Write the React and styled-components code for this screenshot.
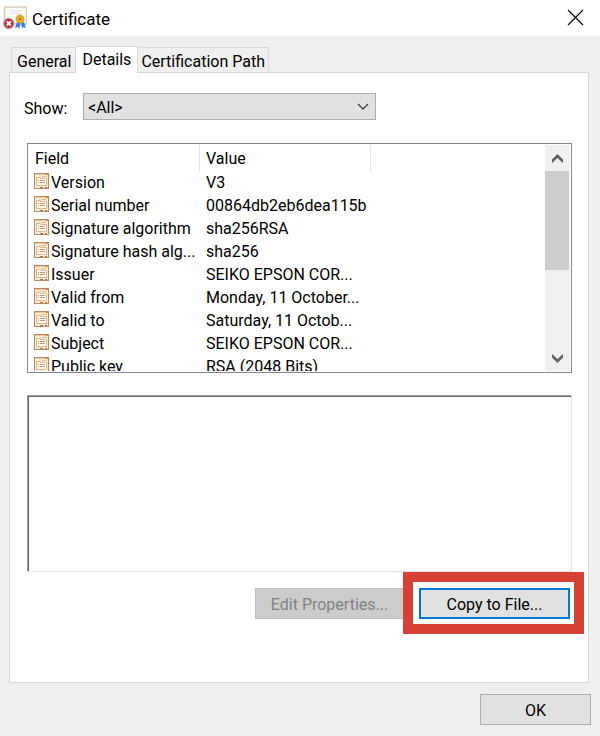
import React, { useCallback, useState } from "react";
import styled, { createGlobalStyle, css } from "styled-components";

const GlobalStyle = createGlobalStyle`
  * {
    box-sizing: border-box;
  }

  body {
    margin: 0;
    background-color: #efefef;
  }

  body,
  button,
  select,
  textarea {
    font-family: Roboto, "Noto Sans", sans-serif;
    font-size: 16px;
    line-height: 23px;
    color: #000;
  }
`;

const Dialog = styled.main`
  display: flex;
  flex-direction: column;
  min-height: 100vh;
`;

const TitleBar = styled.header`
  display: flex;
  align-items: center;
  height: 36px;
  padding: 0 16px 0 3px;
  background-color: #fff;

  h1 {
    flex: 1;
    margin: 0 0 0 5px;
    padding-top: 2px;
    font-size: 17px;
    font-weight: 400;
  }
`;

const CloseButton = styled.button`
  display: flex;
  padding: 0 0 2px;
  border: none;
  background: none;
`;

const Tabs = styled.div`
  display: flex;
  align-items: flex-end;
  padding: 10px 11px 0;
`;

const Tab = styled.button`
  height: 25px;
  padding: ${({ $first }) => ($first ? "2px 4px 0 5px" : "2px 3px 0")};
  border: 1px solid #d9d9d9;
  border-bottom: none;
  border-left-width: ${({ $first }) => ($first ? "1px" : "0")};
  background-color: #efefef;
  white-space: nowrap;

  ${({ $active }) =>
    $active &&
    css`
      height: 27px;
      padding: 0 6px 1px;
      margin-bottom: -1px;
      background-color: #fff;
      z-index: 1;
    `}
`;

const Panel = styled.section`
  display: flex;
  flex-direction: column;
  flex: 1;
  margin: 0 11px 0 9px;
  padding: 20px 16px 48px 17px;
  border: 1px solid #d9d9d9;
  background-color: #fff;
`;

const ShowRow = styled.div`
  display: flex;
  align-items: center;
  margin-left: -3px;

  label {
    width: 59px;
    padding-top: 4px;
  }
`;

const SelectBox = styled.div`
  position: relative;
  width: 293px;

  select {
    display: block;
    width: 100%;
    height: 27px;
    padding: 2px 4px 0;
    border: 1px solid #adadad;
    border-radius: 0;
    background-color: #e1e1e1;
    appearance: none;
  }

  svg {
    position: absolute;
    top: 10px;
    right: 7px;
    pointer-events: none;
  }
`;

const FieldList = styled.div`
  display: flex;
  height: 230px;
  margin-top: 23px;
  padding: 1px;
  border: 1px solid #828790;
  overflow: hidden;
`;

const ListView = styled.div`
  flex: 1;
  min-width: 0;
  overflow: hidden;
`;

const FieldTable = styled.table`
  width: 100%;
  table-layout: fixed;
  border-collapse: separate;
  border-spacing: 0;

  th,
  td {
    height: 23px;
    padding: 0 4px 0 6px;
    font-weight: 400;
    text-align: left;
    white-space: nowrap;
  }

  th {
    height: 26px;
    border-right: 1px solid #e5e5e5;
  }

  th:last-child {
    border-right: none;
  }

  td:first-child {
    padding: 0 2px 0 5px;
  }
`;

const FieldName = styled.div`
  display: flex;
  align-items: center;
  gap: 2px;

  svg {
    flex: none;
    margin-bottom: 3px;
  }
`;

const Scrollbar = styled.div`
  display: flex;
  flex-direction: column;
  width: 25px;
  background-color: #f0f0f0;
`;

const ScrollButton = styled.button`
  display: flex;
  align-items: center;
  justify-content: center;
  height: 26px;
  padding: 0;
  border: none;
  background: none;
`;

const ScrollTrack = styled.div`
  flex: 1;

  div {
    width: 24px;
    height: 99px;
    background-color: #cdcdcd;
  }
`;

const ValueBox = styled.textarea`
  display: block;
  height: 177px;
  margin-top: 22px;
  border: 1px solid #e3e3e3;
  border-top-color: #a0a0a0;
  border-left-color: #a0a0a0;
  box-shadow: inset 1px 1px #696969;
  outline: none;
  resize: none;
`;

const Actions = styled.div`
  display: flex;
  align-items: center;
  justify-content: flex-end;
  margin-right: -12px;
`;

const Button = styled.button`
  width: ${({ $width }) => $width};
  height: 31px;
  padding: 2px 0 0;
  border: ${({ $primary }) => ($primary ? "2px solid #0078d7" : "1px solid #adadad")};
  background-color: #e1e1e1;

  &:disabled {
    border-color: #bfbfbf;
    border-right: none;
    background-color: #ccc;
    color: #838383;
  }
`;

const Highlight = styled.div`
  padding: 6px 4px 5px 6px;
  border: 10px solid #d64035;
  background-color: #fff;
`;

const Footer = styled.footer`
  display: flex;
  justify-content: flex-end;
  padding: 11px 9px;
`;

const FIELDS = [
  { name: "Version", value: "V3" },
  { name: "Serial number", value: "00864db2eb6dea115b" },
  { name: "Signature algorithm", value: "sha256RSA" },
  { name: "Signature hash alg...", value: "sha256" },
  { name: "Issuer", value: "SEIKO EPSON COR..." },
  { name: "Valid from", value: "Monday, 11 October..." },
  { name: "Valid to", value: "Saturday, 11 Octob..." },
  { name: "Subject", value: "SEIKO EPSON COR..." },
  { name: "Public key", value: "RSA (2048 Bits)" },
];

const TABS = ["General", "Details", "Certification Path"];

const CertificateIcon = () => (
  <svg width="24" height="24" viewBox="0 0 24 24" aria-hidden="true">
    <rect x="1.5" y="1" width="22" height="17" fill="#fbfaf5" stroke="#d8cfb9" strokeWidth="1.6" />
    <path d="M6 5h13M8 7.5h9" stroke="#dde0ec" />
    <path d="M14 16l-2 6 3-1 1.5 1.5 1-5.5zM18 17l1 5.5 1.5-1.5 2.5 1-2-6z" fill="#3c7be0" />
    <circle cx="17" cy="13" r="4.4" fill="#dda321" />
    <circle cx="17" cy="13" r="2" fill="#b37a10" stroke="#f2cc60" strokeWidth=".8" />
    <circle cx="5.8" cy="17.5" r="5.1" fill="#c9202f" stroke="#a9a0a2" strokeWidth="1.4" />
    <path d="M3.8 15.5l4 4m0-4l-4 4" stroke="#fff" strokeWidth="2" />
  </svg>
);

const FieldIcon = () => (
  <svg width="15" height="16" viewBox="0 0 15 16" aria-hidden="true">
    <rect x=".5" y=".5" width="14" height="15" fill="#fdebd6" stroke="#b88a63" />
    <path d="M1 1.5h13" stroke="#f8c796" />
    <path d="M12 1.5h1.5M6 14.5h3M11 14.5h2" stroke="#aa7345" />
    <path d="M2.5 4.5h4v1h6v7h-10z" fill="#fffaf2" stroke="#e2b78d" />
    <path d="M7.5 3.5h5" stroke="#e2b78d" />
    <path d="M4 7.5h1m1 0h5M4 9.5h1m1 0h5" stroke="#c99a70" />
  </svg>
);

const ScrollArrow = ({ down }) => (
  <svg width="11" height="9" viewBox="0 0 11 9" aria-hidden="true">
    <path
      d={down ? "M0 0l5.5 5L11 0v3.5L5.5 9 0 3.5z" : "M0 9l5.5-5L11 9V5.5L5.5 0 0 5.5z"}
      fill="#606060"
    />
  </svg>
);

const App = () => {
  const [activeTab, setActiveTab] = useState("Details");

  const onTabClick = useCallback((e) => {
    setActiveTab(e.currentTarget.value);
  }, []);

  return (
    <Dialog>
      <GlobalStyle />
      <TitleBar>
        <CertificateIcon />
        <h1>Certificate</h1>
        <CloseButton aria-label="Close">
          <svg width="17" height="17" viewBox="0 0 17 17" aria-hidden="true">
            <path d="M1 1l15 15M16 1L1 16" stroke="#000" strokeWidth="1.1" />
          </svg>
        </CloseButton>
      </TitleBar>

      <Tabs role="tablist">
        {TABS.map((tab, i) => (
          <Tab
            key={tab}
            role="tab"
            value={tab}
            aria-selected={tab === activeTab}
            $first={i === 0}
            $active={tab === activeTab}
            onClick={onTabClick}
          >
            {tab}
          </Tab>
        ))}
      </Tabs>

      <Panel>
        <ShowRow>
          <label htmlFor="show">Show:</label>
          <SelectBox>
            <select id="show">
              <option>&lt;All&gt;</option>
            </select>
            <svg width="12" height="7" viewBox="0 0 12 7" aria-hidden="true">
              <path d="M1 1l5 5 5-5" fill="none" stroke="#444" strokeWidth="1.3" />
            </svg>
          </SelectBox>
        </ShowRow>

        <FieldList>
          <ListView>
            <FieldTable>
              <colgroup>
                <col width="171" />
                <col width="171" />
                <col />
              </colgroup>
              <thead>
                <tr>
                  <th>Field</th>
                  <th>Value</th>
                  <th />
                </tr>
              </thead>
              <tbody>
                {FIELDS.map(({ name, value }) => (
                  <tr key={name}>
                    <td>
                      <FieldName>
                        <FieldIcon />
                        <span>{name}</span>
                      </FieldName>
                    </td>
                    <td>{value}</td>
                    <td />
                  </tr>
                ))}
              </tbody>
            </FieldTable>
          </ListView>
          <Scrollbar>
            <ScrollButton aria-label="Scroll up">
              <ScrollArrow />
            </ScrollButton>
            <ScrollTrack>
              <div />
            </ScrollTrack>
            <ScrollButton aria-label="Scroll down">
              <ScrollArrow down />
            </ScrollButton>
          </Scrollbar>
        </FieldList>

        <ValueBox aria-label="Field value" readOnly />

        <Actions>
          <Button $width="148px" disabled>
            Edit Properties...
          </Button>
          <Highlight>
            <Button $width="151px" $primary>
              Copy to File...
            </Button>
          </Highlight>
        </Actions>
      </Panel>

      <Footer>
        <Button $width="111px">OK</Button>
      </Footer>
    </Dialog>
  );
};

export default App;
